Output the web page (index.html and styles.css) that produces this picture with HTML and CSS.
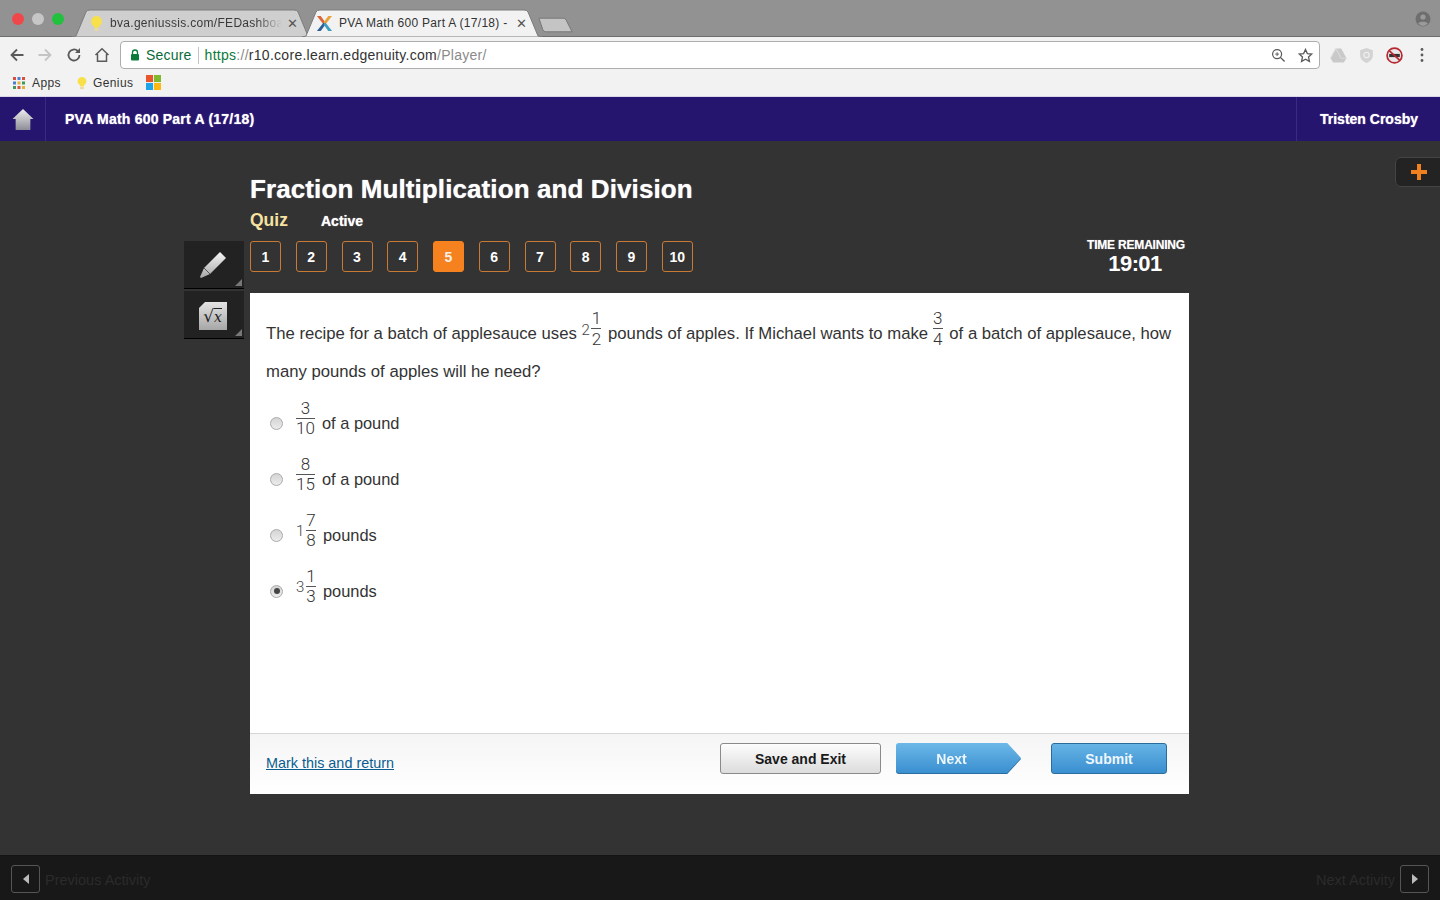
FILE: index.html
```html
<!DOCTYPE html>
<html lang="en">
<head>
<meta charset="utf-8">
<title>PVA Math 600 Part A (17/18)</title>
<link rel="stylesheet" href="styles.css">
</head>
<body>
<div class="chrome">
  <div class="tabstrip">
    <div class="lights"><i class="light red"></i><i class="light grey"></i><i class="light green"></i></div>
    <div class="tab tab-back">
      <svg class="tab-shape" viewBox="0 0 240 28" preserveAspectRatio="none"><path d="M0 28 L4 27 L14 3 Q15 1 18 1 L222 1 Q225 1 226 3 L236 27 L240 28Z" fill="#cfcfcf" stroke="#7c7c7c"/></svg>
      <svg class="favicon" viewBox="0 0 14 16"><path d="M7 1a5 5 0 0 0-3 9c.7.6.8 1.2 1 2h4c.2-.8.3-1.400 1-2a5 5 0 0 0-3-9z" fill="#f8e04a"/><rect x="5" y="12.500" width="4" height="2.500" fill="#e8d9a0"/></svg>
      <span class="tab-title fade">bva.geniussis.com/FEDashboard</span>
      <span class="tab-x">✕</span>
    </div>
    <div class="tab tab-front">
      <svg class="tab-shape" viewBox="0 0 240 28" preserveAspectRatio="none"><path d="M0 28 L4 27 L14 3 Q15 1 18 1 L222 1 Q225 1 226 3 L236 27 L240 28Z" fill="#f2f2f2" stroke="#7c7c7c"/></svg>
      <svg class="favicon" viewBox="0 0 18 18"><path d="M1 1 H5 L10 8 L8 10 Z" fill="#d9653a"/><path d="M17 1 H13 L8 8 L10 10 Z" fill="#e8a33b"/><path d="M1 17 H5 L10 10 L8 8 Z" fill="#2c5f98"/><path d="M17 17 H13 L8 10 L10 8 Z" fill="#3a9fc0"/></svg>
      <span class="tab-title">PVA Math 600 Part A (17/18) -</span>
      <span class="tab-x">✕</span>
    </div>
    <svg class="newtab" viewBox="0 0 36 16"><path d="M1 1 H26 Q28 1 29 3 L35 15 H8 Q6 15 5 13 Z" fill="#c4c4c4" stroke="#777"/></svg>
    <svg class="profile" viewBox="0 0 16 16"><circle cx="8" cy="8" r="7.500" fill="#6e6e6e"/><circle cx="8" cy="6" r="2.600" fill="#9a9a9a"/><path d="M3.200 12.500c1-2.500 8.600-2.500 9.600 0A6 6 0 0 1 3.200 12.500z" fill="#9a9a9a"/></svg>
  </div>
  <div class="toolbar">
    <svg class="tb-icon" viewBox="0 0 16 16"><path d="M14.500 8H2.500M8 2.500 2.500 8 8 13.500" fill="none" stroke="#5a5a5a" stroke-width="1.800"/></svg>
    <svg class="tb-icon" viewBox="0 0 16 16"><path d="M1.500 8h12M8 2.500 13.500 8 8 13.500" fill="none" stroke="#c4c4c4" stroke-width="1.800"/></svg>
    <svg class="tb-icon" viewBox="0 0 16 16"><path d="M13.500 8a5.500 5.500 0 1 1-1.700-4" fill="none" stroke="#5a5a5a" stroke-width="1.800"/><path d="M14 1v5H9z" fill="#5a5a5a"/></svg>
    <svg class="tb-icon" viewBox="0 0 16 16"><path d="M1.500 8 8 1.800 14.500 8M3.500 7v7.200h9V7" fill="none" stroke="#5a5a5a" stroke-width="1.500"/></svg>
    <div class="omnibox">
      <svg class="lock" viewBox="0 0 10 12"><path d="M2.500 5V3.500a2.500 2.500 0 0 1 5 0V5" fill="none" stroke="#0b7a3b" stroke-width="1.300"/><rect x="1" y="5" width="8" height="6.500" rx="1" fill="#0b7a3b"/></svg>
      <span class="secure">Secure</span>
      <span class="url"><span class="https">https</span><span class="path">://</span>r10.core.learn.edgenuity.com<span class="path">/Player/</span></span>
      <svg class="omni-icon zoom-icon" viewBox="0 0 16 16"><circle cx="6.500" cy="6.500" r="4.800" fill="none" stroke="#5a5a5a" stroke-width="1.300"/><path d="M10 10l4.500 4.500" stroke="#5a5a5a" stroke-width="1.500"/><path d="M4.500 6.500h4M6.500 4.500v4" stroke="#5a5a5a"/></svg>
      <svg class="omni-icon" viewBox="0 0 16 16"><path d="M8 1.500l2 4.400 4.700.5-3.500 3.200 1 4.700L8 11.900l-4.200 2.400 1-4.700L1.300 6.400 6 5.900z" fill="none" stroke="#5a5a5a" stroke-width="1.400"/></svg>
    </div>
    <div class="extensions">
      <svg class="ext" viewBox="0 0 16 16"><path d="M5.500 1.500h5l5 9-2.500 4h-10L.500 10.500z" fill="#c9c9c9"/><path d="M5.500 1.500l5 9h5M.500 10.500 5.500 1.500" fill="none" stroke="#dcdcdc"/></svg>
      <svg class="ext" viewBox="0 0 16 16"><path d="M8 1l6 2v5c0 3.500-3 6-6 7-3-1-6-3.500-6-7V3z" fill="#d3d3d3"/><circle cx="8" cy="7.500" r="2.500" fill="none" stroke="#eee" stroke-width="1.200"/></svg>
      <svg class="ext" viewBox="0 0 16 16"><circle cx="8" cy="8" r="7" fill="#e8e8e8" stroke="#b8262e" stroke-width="1.600"/><rect x="3" y="6.500" width="10" height="3" fill="#333"/><path d="M3 3.500 13 12.500" stroke="#b8262e" stroke-width="1.600"/></svg>
      <svg class="ext dots" viewBox="0 0 4 16"><circle cx="2" cy="2.500" r="1.400" fill="#5a5a5a"/><circle cx="2" cy="8" r="1.400" fill="#5a5a5a"/><circle cx="2" cy="13.500" r="1.400" fill="#5a5a5a"/></svg>
    </div>
  </div>
  <div class="bookmarks">
    <span class="bm">
      <svg class="bm-icon" viewBox="0 0 14 14"><g><rect x="1" y="1" width="3" height="3" fill="#d9503f"/><rect x="5.500" y="1" width="3" height="3" fill="#4a7fd6"/><rect x="10" y="1" width="3" height="3" fill="#d9503f"/><rect x="1" y="5.500" width="3" height="3" fill="#4a7fd6"/><rect x="5.500" y="5.500" width="3" height="3" fill="#e0b23c"/><rect x="10" y="5.500" width="3" height="3" fill="#3f9a5a"/><rect x="1" y="10" width="3" height="3" fill="#3f9a5a"/><rect x="5.500" y="10" width="3" height="3" fill="#d9503f"/><rect x="10" y="10" width="3" height="3" fill="#e0b23c"/></g></svg>
      Apps
    </span>
    <span class="bm">
      <svg class="bm-icon" viewBox="0 0 14 16"><path d="M7 1a5 5 0 0 0-3 9c.7.6.8 1.2 1 2h4c.2-.8.3-1.400 1-2a5 5 0 0 0-3-9z" fill="#f8e04a"/><rect x="5" y="12.500" width="4" height="2.500" fill="#e8d9a0"/></svg>
      Genius
    </span>
    <svg class="ms-logo" viewBox="0 0 16 16"><rect width="7.500" height="7.500" fill="#e8562a"/><rect x="8.500" width="7.500" height="7.500" fill="#7fb92e"/><rect y="8.500" width="7.500" height="7.500" fill="#1fa5e8"/><rect x="8.500" y="8.500" width="7.500" height="7.500" fill="#fdb813"/></svg>
  </div>
</div>

<header class="app-header">
  <div class="home-cell">
    <svg class="home-icon" viewBox="0 0 20 20"><defs><linearGradient id="homeg" x1="0" y1="0" x2="0" y2="1"><stop offset="0" stop-color="#eee"/><stop offset="1" stop-color="#8d8d98"/></linearGradient></defs><path d="M10 0 20 9.500H17V20H3V9.500H0Z" fill="url(#homeg)"/></svg>
  </div>
  <div class="course-title">PVA Math 600 Part A (17/18)</div>
  <div class="user-cell">Tristen Crosby</div>
</header>

<main class="stage">
  <button class="plus-tab" type="button" aria-label="Expand"><svg viewBox="0 0 16 16"><path d="M6 0h4v6h6v4h-6v6H6v-6H0V6h6z" fill="#f0811e"/></svg></button>
  <div class="lesson">
    <div class="lesson-head">
      <h1>Fraction Multiplication and Division</h1>
      <div class="meta"><span class="kind">Quiz</span><span class="state">Active</span></div>
    </div>
    <div class="tools">
      <div class="tool">
        <svg class="pencil" viewBox="0 0 28 28"><defs><linearGradient id="peng" x1="0" y1="0" x2="0" y2="1"><stop offset="0" stop-color="#f5f5f5"/><stop offset="1" stop-color="#a8a8a8"/></linearGradient></defs><path d="M21 1 L27 7 L11 23 L2 27 L1 26 L5 17 Z" fill="url(#peng)"/><path d="M5 17 L11 23" stroke="#555"/></svg>
      </div>
      <div class="tool">
        <div class="calc"><span class="sqrt">√<em>x</em></span></div>
      </div>
    </div>
    <nav class="qnav">
      <div class="qnums">
        <a class="qnum">1</a><a class="qnum">2</a><a class="qnum">3</a><a class="qnum">4</a><a class="qnum current">5</a><a class="qnum">6</a><a class="qnum">7</a><a class="qnum">8</a><a class="qnum">9</a><a class="qnum">10</a>
      </div>
      <div class="timer"><div class="timer-label">TIME REMAINING</div><div class="timer-value">19:01</div></div>
    </nav>
    <section class="card">
      <div class="card-body">
        <p class="question">The recipe for a batch of applesauce uses <span class="whole">2</span><span class="frac"><span>1</span><span>2</span></span> pounds of apples. If Michael wants to make <span class="frac"><span>3</span><span>4</span></span> of a batch of applesauce, how many pounds of apples will he need?</p>
        <ul class="options">
          <li class="option"><i class="radio"></i><span class="frac wide"><span>3</span><span>10</span></span>of a pound</li>
          <li class="option"><i class="radio"></i><span class="frac wide"><span>8</span><span>15</span></span>of a pound</li>
          <li class="option"><i class="radio"></i><span class="whole">1</span><span class="frac"><span>7</span><span>8</span></span>pounds</li>
          <li class="option"><i class="radio checked"></i><span class="whole">3</span><span class="frac"><span>1</span><span>3</span></span>pounds</li>
        </ul>
      </div>
      <div class="card-foot">
        <a class="mark-link">Mark this and return</a>
        <div class="actions">
          <button class="btn btn-save" type="button">Save and Exit</button>
          <button class="btn btn-next" type="button"><span>Next</span></button>
          <button class="btn btn-submit" type="button">Submit</button>
        </div>
      </div>
    </section>
  </div>
</main>

<footer class="activity-bar">
  <div class="activity-side">
    <span class="arrow-btn"><i class="tri tri-left"></i></span>
    <span class="activity-label">Previous Activity</span>
  </div>
  <div class="activity-side">
    <span class="activity-label">Next Activity</span>
    <span class="arrow-btn"><i class="tri tri-right"></i></span>
  </div>
</footer>
</body>
</html>
```
FILE: styles.css
```css
* { box-sizing: border-box; }
html, body { margin: 0; height: 100%; }
body {
  width: 1440px;
  height: 900px;
  overflow: hidden;
  display: flex;
  flex-direction: column;
  font-family: "Liberation Sans", Arial, sans-serif;
  background: #333;
}

/* Browser chrome */
.chrome { flex: none; height: 97px; background: #f2f2f2; border-bottom: 1px solid #d9d6ea; }
.tabstrip {
  position: relative;
  height: 37px;
  display: flex;
  align-items: flex-end;
  background: #929292;
  border-bottom: 1px solid #6e6e6e;
  padding-left: 12px;
}
.lights { display: flex; gap: 8px; align-self: flex-start; margin-top: 13px; width: 60px; }
.light { width: 12px; height: 12px; border-radius: 50%; }
.red { background: #f0474a; }
.grey { background: #c6c6c6; }
.green { background: #22c13d; }
.tab {
  position: relative;
  width: 240px;
  height: 28px;
  display: flex;
  align-items: center;
  font-size: 12px;
  letter-spacing: .3px;
  color: #333;
  margin-bottom: -1px;
}
.tab-back { padding-left: 16px; color: #3a3a3a; }
.tab-front { padding-left: 14px; margin-left: -10px; color: #333; }
.tab-shape { position: absolute; left: 0; top: 0; width: 100%; height: 100%; }
.favicon { position: relative; width: 17px; height: 17px; flex: none; }
.tab-title {
  position: relative;
  margin-left: 6px;
  width: 170px;
  overflow: hidden;
  white-space: nowrap;
}
.tab-back .tab-title { margin-left: 5px; width: 172px; }
.fade { -webkit-mask-image: linear-gradient(90deg, #000 85%, transparent 100%); mask-image: linear-gradient(90deg, #000 85%, transparent 100%); }
.tab-x { position: relative; margin-left: 7px; font-size: 13px; letter-spacing: 0; font-family: "DejaVu Sans", sans-serif; color: #555; }
.tab-back .tab-x { margin-left: 5px; }
.newtab { width: 35px; height: 16px; margin-left: -4px; margin-bottom: 3px; flex: none; }
.profile { position: absolute; right: 9px; top: 11px; width: 16px; height: 16px; }

.toolbar { height: 32px; display: flex; align-items: center; padding: 4px 0 0 9px; }
.tb-icon { width: 16px; height: 16px; margin-right: 12px; flex: none; }
.tb-icon:nth-child(3) { margin-right: 12px; margin-left: 1px; }
.tb-icon:nth-child(4) { margin-right: 10px; }
.omnibox {
  width: 1200px;
  height: 28px;
  display: flex;
  align-items: center;
  background: #fff;
  border: 1px solid #adadad;
  border-radius: 4px;
  padding: 0 6px 0 9px;
  font-size: 14px;
  color: #333;
}
.lock { width: 10px; height: 12px; flex: none; }
.secure { color: #0b6b38; margin-left: 6px; padding-right: 6px; border-right: 1px solid #c4c4c4; line-height: 17px; letter-spacing: .2px; }
.url { margin-left: 6px; flex: 1; letter-spacing: .28px; }
.https { color: #0b7a3b; }
.path { color: #8a8a8a; }
.omni-icon { width: 15px; height: 15px; flex: none; }
.zoom-icon { margin-right: 12px; }
.extensions { display: flex; align-items: center; margin-left: 10px; }
.ext { width: 17px; height: 17px; margin-right: 11px; flex: none; }
.dots { width: 4px; height: 16px; margin-left: 6px; margin-right: 0; }

.bookmarks { height: 27px; display: flex; align-items: center; padding-left: 12px; font-size: 12px; letter-spacing: .4px; color: #333; }
.bm { display: flex; align-items: center; margin-right: 14px; }
.bm-icon { width: 14px; height: 14px; margin-right: 6px; }
.bm:nth-child(2) .bm-icon { margin-right: 4px; }
.ms-logo { width: 15px; height: 15px; margin-left: -1px; }

/* App header */
.app-header {
  flex: none;
  height: 44px;
  display: flex;
  align-items: center;
  background: #26156f;
  color: #fff;
  font-size: 14px;
  font-weight: bold;
  text-shadow: 0 0 1px rgba(255,255,255,.8);
}
.home-cell { width: 46px; height: 100%; display: flex; align-items: center; justify-content: center; border-right: 1px solid #3a2a82; }
.home-icon { width: 22px; height: 21px; }
.course-title { margin-left: 19px; flex: 1; letter-spacing: .22px; }
.user-cell { width: 144px; height: 100%; display: flex; align-items: center; padding-left: 23px; border-left: 1px solid #3a2a82; }

/* Stage */
.stage { position: relative; flex: 1; min-height: 0; background: #333; padding-left: 184px; }
.plus-tab {
  position: absolute;
  right: -2px;
  top: 16px;
  width: 47px;
  height: 30px;
  padding: 0;
  display: flex;
  align-items: center;
  justify-content: center;
  background: #232323;
  border: 1px solid #444;
  border-radius: 6px 0 0 6px;
}
.plus-tab svg { width: 16px; height: 16px; }
.lesson {
  display: grid;
  grid-template-columns: 66px 939px;
  grid-template-rows: 100px 52px 501px;
}
.lesson-head { grid-column: 2; grid-row: 1; padding-top: 30px; color: #fff; }
h1 {
  margin: 0;
  font-size: 26px;
  line-height: 36px;
  font-weight: bold;
  letter-spacing: .1px;
  text-shadow: 0 0 1px rgba(255,255,255,.8);
}
.meta { display: flex; align-items: baseline; margin-top: 1px; font-weight: bold; height: 24px; line-height: 24px; }
.kind { color: #f6e3a1; font-size: 17.500px; width: 71px; }
.state { font-size: 14px; text-shadow: 0 0 1px rgba(255,255,255,.8); }

.tools { grid-column: 1; grid-row: 2 / 4; display: flex; flex-direction: column; gap: 2px; width: 60px; align-self: start; }
.tool {
  position: relative;
  width: 60px;
  height: 48px;
  background: #222;
  border-bottom: 1px solid #000;
  display: flex;
  align-items: center;
  justify-content: center;
}
.tool::after {
  content: "";
  position: absolute;
  right: 2px;
  bottom: 2px;
  border-style: solid;
  border-width: 0 0 7px 7px;
  border-color: transparent transparent #777 transparent;
}
.pencil { width: 28px; height: 28px; margin-right: 3px; }
.calc {
  position: relative;
  width: 28px;
  height: 28px;
  margin: 2px 3px 0 0;
  background: linear-gradient(#e4e4e4, #a6a6a6);
  display: flex;
  align-items: center;
  justify-content: center;
}
.calc::before {
  content: "";
  position: absolute;
  left: 0;
  top: 0;
  border-style: solid;
  border-width: 6px 6px 0 0;
  border-color: #222 transparent transparent transparent;
}
.sqrt { font-family: "DejaVu Serif", serif; font-size: 17px; color: #222; }
.sqrt em { font-size: 14px; border-top: 1px solid #222; }

.qnav { grid-column: 2; grid-row: 2; display: flex; justify-content: space-between; align-items: flex-start; }
.qnums { display: flex; gap: 14.75px; }
.qnum {
  width: 31px;
  height: 31px;
  display: flex;
  align-items: center;
  justify-content: center;
  color: #fff;
  font-size: 14px;
  font-weight: bold;
  border: 1px solid #c97a35;
  border-radius: 3px;
}
.current { background: #f5821f; border-color: #f5821f; color: #f6f1e6; }
.timer { width: 100px; margin-right: 3px; color: #fff; text-align: center; }
.timer-label { font-size: 12px; line-height: 16px; font-weight: bold; margin: -4px 0 0 0; letter-spacing: -.2px; text-shadow: 0 0 1px rgba(255,255,255,.5); white-space: nowrap; }
.timer-value { font-size: 22px; line-height: 22px; font-weight: bold; letter-spacing: -.6px; margin-left: -2px; }

/* Question card */
.card { grid-column: 2; grid-row: 3; background: #fff; display: flex; flex-direction: column; color: #333; }
.card-body { flex: 1; padding: 18px 10px 0 16px; }
.question { margin: 0; font-size: 16.700px; line-height: 38px; }
.frac {
  display: inline-flex;
  flex-direction: column;
  align-items: stretch;
  text-align: center;
  width: 10px;
  font-family: Roboto, "Liberation Sans", sans-serif;
  font-weight: 300;
  font-size: 17px;
  color: #333;
}
.frac span:first-child { height: 22px; line-height: 22px; border-bottom: 1px solid #555; }
.frac span:last-child { height: 20px; line-height: 21px; }
.whole {
  display: inline-block;
  width: 10px;
  font-family: Roboto, "Liberation Sans", sans-serif;
  font-weight: 300;
  font-size: 15px;
  color: #444;
}
.question .frac { vertical-align: 15px; margin: -10px 2px 0 0; }
.question .whole { vertical-align: 4px; }
.options { list-style: none; margin: 4px 0 0; padding: 0; font-size: 16.400px; }
.option { height: 56px; display: flex; align-items: center; }
.option .frac { margin: 0 7px 10px 0; }
.option .frac span:last-child { line-height: 19px; }
.option .frac.wide { width: 19px; margin-right: 7px; }
.option .whole { margin-bottom: 9px; }
.radio {
  width: 13px;
  height: 13px;
  margin: 0 13px 0 4px;
  border-radius: 50%;
  background: linear-gradient(#d4d4d4, #ececec);
  border: 1px solid #aaa;
  flex: none;
  position: relative;
}
.checked::after {
  content: "";
  position: absolute;
  left: 2.500px;
  top: 2.500px;
  width: 6px;
  height: 6px;
  border-radius: 50%;
  background: #444;
}
.card-foot {
  height: 61px;
  display: flex;
  justify-content: space-between;
  padding: 9px 22px 0 16px;
  border-top: 1px solid #d5d5d5;
  background: linear-gradient(#f5f5f5, #fff);
}
.mark-link { color: #0b5d8f; font-size: 14.400px; text-decoration: underline; line-height: 40px; }
.actions { display: flex; height: 31px; }
.btn {
  height: 31px;
  padding: 0;
  font-family: inherit;
  font-size: 14px;
  font-weight: bold;
  border-radius: 3px;
}
.btn-save { width: 161px; color: #1a1a1a; background: linear-gradient(#fdfdfd, #dcdcdc); border: 1px solid #8a8a8a; margin-right: 15px; }
.btn-next {
  width: 125px;
  height: 30px;
  margin-right: 30px;
  color: #eef7fd;
  border: 0;
  background: none;
  filter: drop-shadow(0 1px 0 #2a6c9e);
}
.btn-next span {
  display: flex;
  height: 30px;
  align-items: center;
  justify-content: center;
  padding: 1px 14px 0 0;
  border-radius: 3px 0 0 3px;
  background: linear-gradient(#6cb8e8, #3a8fd0);
  clip-path: polygon(0 0, 89% 0, 100% 50%, 89% 100%, 0 100%);
}
.btn-submit { width: 116px; color: #eef7fd; background: linear-gradient(#66b3e5, #3a8fd0); border: 1px solid #2a6c9e; }

/* Bottom bar */
.activity-bar {
  flex: none;
  height: 45px;
  display: flex;
  justify-content: space-between;
  padding: 9px 11px 0;
  background: #181818;
  border-top: 1px solid #141414;
}
.activity-side { display: flex; height: 28px; align-items: center; gap: 5px; }
.arrow-btn { width: 29px; height: 28px; display: flex; align-items: center; justify-content: center; border: 1px solid #555; border-radius: 3px; }
.activity-label { color: #2b2b2b; font-size: 14.500px; margin-top: 2px; }
.tri { border-style: solid; }
.tri-left { border-width: 5px 6px 5px 0; border-color: transparent #bbb transparent transparent; }
.tri-right { border-width: 5px 0 5px 6px; border-color: transparent transparent transparent #bbb; }
```
